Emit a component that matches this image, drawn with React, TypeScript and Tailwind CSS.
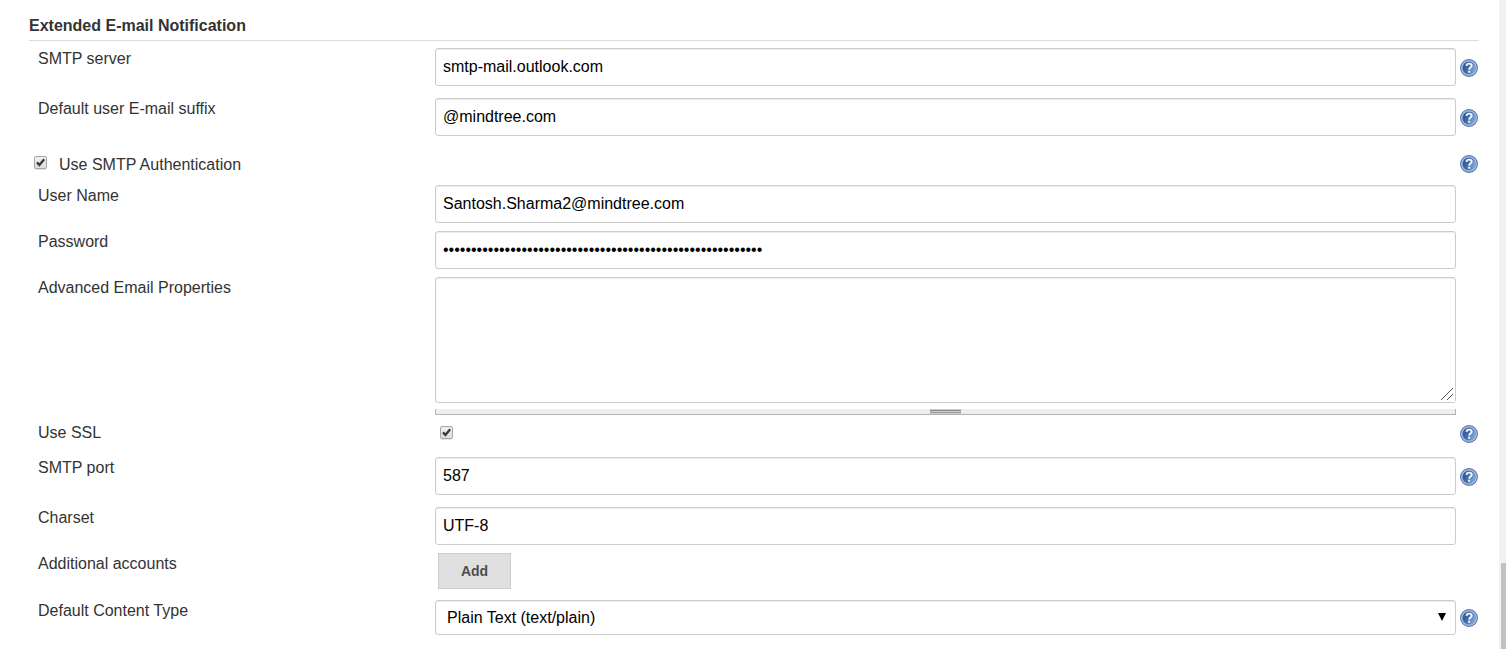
import { useId, useState, type ReactNode } from "react";

const fieldClass =
  "block w-full rounded-[3px] border border-[#ccc] bg-white px-[7px] text-base text-black shadow-[inset_0_1px_1px_rgba(0,0,0,0.08)] outline-none focus:border-[#5c9ded]";

const inputClass = `${fieldClass} h-[38px]`;

function HelpIcon({ topic }: { topic: string }) {
  const id = useId();
  return (
    <button type="button" aria-label={`Help for ${topic}`} className="block size-[18px] cursor-pointer">
      <svg viewBox="0 0 18 18" className="size-full" aria-hidden="true">
        <defs>
          <linearGradient id={id} x1="0" y1="0.3" x2="1" y2="0.7">
            <stop offset="0.1" stopColor="#2c569b" />
            <stop offset="0.5" stopColor="#4a73b0" />
            <stop offset="1" stopColor="#8fb0dc" />
          </linearGradient>
        </defs>
        <circle cx="9" cy="9" r="8.4" fill="#b4c8e4" stroke="#5678ae" strokeWidth="1.1" />
        <circle cx="9" cy="9" r="6.6" fill={`url(#${id})`} stroke="#7f9dca" strokeWidth="0.6" />
        <path
          d="M6.4 6.8C6.6 5.3 7.6 4.6 9.1 4.6c1.6 0 2.6.8 2.6 2.1 0 1.8-2.4 1.9-2.5 3.9"
          fill="none"
          stroke="#f4f8fd"
          strokeWidth="1.9"
        />
        <rect x="8.1" y="11.7" width="2.1" height="1.9" fill="#f4f8fd" />
      </svg>
    </button>
  );
}

function CheckBox({ id }: { id: string }) {
  return (
    <span className="grid size-[13px] shrink-0">
      <input
        id={id}
        type="checkbox"
        defaultChecked
        className="peer col-start-1 row-start-1 size-[13px] appearance-none rounded-[2px] border border-[#a6a6a6] bg-linear-to-b from-[#f0f0f0] to-[#dedede] shadow-[0_1px_1px_rgba(0,0,0,0.12)]"
      />
      <svg
        viewBox="0 0 13 13"
        className="pointer-events-none invisible col-start-1 row-start-1 size-[13px] peer-checked:visible"
        aria-hidden="true"
      >
        <path d="M3 6.4 5.4 9 10.2 3.2" fill="none" stroke="#3c3c3c" strokeWidth="2.4" />
      </svg>
    </span>
  );
}

interface RowProps {
  label: string;
  htmlFor: string;
  rowClass: string;
  help?: string;
  children: ReactNode;
}

function Row({ label, htmlFor, rowClass, help, children }: RowProps) {
  return (
    <div className={`grid grid-cols-[28%_minmax(0,1fr)_23px] items-start ${rowClass}`}>
      <label htmlFor={htmlFor} className="pl-[9px] leading-[22px]">
        {label}
      </label>
      <div>{children}</div>
      {help && (
        <div className={`flex items-center pl-1 ${help}`}>
          <HelpIcon topic={label} />
        </div>
      )}
    </div>
  );
}

export default function App() {
  const [accounts, setAccounts] = useState<string[]>([]);

  return (
    <div className="flex h-screen overflow-hidden bg-white font-['Liberation_Sans',Arial,sans-serif] text-base text-[#333]">
      <main className="min-w-0 flex-1 overflow-hidden pt-4 pr-5 pl-[29px]">
        <form onSubmit={(event) => event.preventDefault()}>
          <h2 className="mb-[7px] border-b border-[#ddd] pb-1 font-bold leading-5">
            Extended E-mail Notification
          </h2>

          <Row label="SMTP server" htmlFor="server" rowClass="pb-2.5" help="h-10">
            <input id="server" className={inputClass} defaultValue="smtp-mail.outlook.com" />
          </Row>
          <Row label="Default user E-mail suffix" htmlFor="suffix" rowClass="pb-2.5" help="h-10">
            <input id="suffix" className={inputClass} defaultValue="@mindtree.com" />
          </Row>

          <div className="grid h-[37px] grid-cols-[minmax(0,1fr)_23px] items-start">
            <div className="flex pt-1.5 pl-[5px]">
              <span className="pt-0.5">
                <CheckBox id="auth" />
              </span>
              <label htmlFor="auth" className="pl-3 leading-[22px]">
                Use SMTP Authentication
              </label>
            </div>
            <div className="flex h-8 items-center pl-1">
              <HelpIcon topic="Use SMTP Authentication" />
            </div>
          </div>

          <Row label="User Name" htmlFor="user" rowClass="pb-2">
            <input id="user" className={inputClass} defaultValue="Santosh.Sharma2@mindtree.com" />
          </Row>
          <Row label="Password" htmlFor="password" rowClass="pb-2">
            <input
              id="password"
              type="password"
              className={inputClass}
              defaultValue={"x".repeat(57)}
            />
          </Row>
          <Row label="Advanced Email Properties" htmlFor="properties" rowClass="pb-[7px]">
            <div className="grid">
              <textarea
                id="properties"
                className={`${fieldClass} col-start-1 row-start-1 h-[126px] resize-y py-1.5`}
              />
              <svg
                viewBox="0 0 15 15"
                className="pointer-events-none z-10 col-start-1 row-start-1 mr-px mb-px size-[15px] self-end justify-self-end bg-white"
                aria-hidden="true"
              >
                <path d="M1 13 13 1M7 13l6-6" fill="none" stroke="#555" strokeWidth="1" />
              </svg>
            </div>
            <div className="mt-1.5 flex h-1.5 justify-center border-x border-b border-[#b5b5b0] bg-[#eee]">
              <div className="flex h-[5px] w-[31px] flex-col gap-px bg-[#ccc] pt-px">
                <div className="h-px bg-[#888]" />
                <div className="h-px bg-[#999]" />
              </div>
            </div>
          </Row>
          <Row label="Use SSL" htmlFor="ssl" rowClass="h-[35px]" help="h-6">
            <div className="pt-1 pl-[5px]">
              <CheckBox id="ssl" />
            </div>
          </Row>
          <Row label="SMTP port" htmlFor="port" rowClass="pb-2.5" help="h-10">
            <input id="port" className={inputClass} defaultValue="587" />
          </Row>
          <Row label="Charset" htmlFor="charset" rowClass="pb-2">
            <input id="charset" className={inputClass} defaultValue="UTF-8" />
          </Row>
          <Row label="Additional accounts" htmlFor="add" rowClass="pb-[11px]">
            {accounts.map((account, index) => (
              <input key={index} aria-label="Account" className={`${inputClass} mb-2`} defaultValue={account} />
            ))}
            <button
              id="add"
              type="button"
              aria-label="Add"
              onClick={() => setAccounts([...accounts, ""])}
              className="ml-[3px] block h-9 w-[73px] cursor-pointer border border-[#ccc] bg-[#e0e0e0] text-sm font-bold text-[#4d4d4d]"
            >
              Add
            </button>
          </Row>
          <Row label="Default Content Type" htmlFor="content" rowClass="pb-3" help="h-9">
            <div className="grid items-center">
              <select
                id="content"
                defaultValue="plain"
                className={`${fieldClass} col-start-1 row-start-1 h-[35px] appearance-none pr-7 pl-[11px]`}
              >
                <option value="plain">Plain Text (text/plain)</option>
                <option value="html">HTML (text/html)</option>
              </select>
              <svg
                viewBox="0 0 8 8"
                className="pointer-events-none col-start-1 row-start-1 mr-[10px] mb-0.5 size-2 justify-self-end"
                aria-hidden="true"
              >
                <path d="M0 0h8L4 8z" fill="#000" />
              </svg>
            </div>
          </Row>
        </form>
      </main>
      <div className="flex w-[7px] shrink-0 flex-col justify-end bg-[#f1f1f1] pl-0.5" aria-hidden="true">
        <div className="h-[86px] bg-[#c1c1c1]" />
      </div>
    </div>
  );
}
